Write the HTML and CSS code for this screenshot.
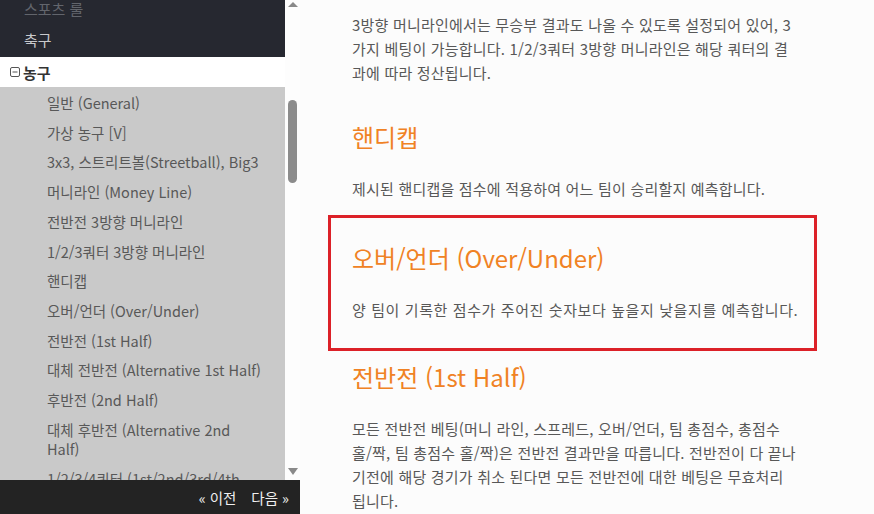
FILE: index.html
```html
<!DOCTYPE html>
<html lang="ko">
<head>
<meta charset="utf-8">
<title>농구 규칙</title>
<link rel="stylesheet" href="styles.css">
</head>
<body>
<div class="app">
  <aside class="sidebar">
    <div class="sidebar-body">
      <nav class="nav">
        <div class="nav-inner">
          <div class="nav-item dark faded">스포츠 룰</div>
          <div class="nav-item dark">축구</div>
          <div class="nav-item open">
            <svg class="toggle" width="10" height="10" viewBox="0 0 10 10"><rect x="0.5" y="0.5" width="9" height="9" rx="1.5" fill="none" stroke="#555" stroke-width="1"/><line x1="2.5" y1="5" x2="7.5" y2="5" stroke="#555" stroke-width="1"/></svg>
            <span>농구</span>
          </div>
          <ul class="sub">
            <li>일반 (General)</li>
            <li>가상 농구 [V]</li>
            <li>3x3, 스트리트볼(Streetball), Big3</li>
            <li>머니라인 (Money Line)</li>
            <li>전반전 3방향 머니라인</li>
            <li>1/2/3쿼터 3방향 머니라인</li>
            <li>핸디캡</li>
            <li>오버/언더 (Over/Under)</li>
            <li>전반전 (1st Half)</li>
            <li>대체 전반전 (Alternative 1st Half)</li>
            <li>후반전 (2nd Half)</li>
            <li>대체 후반전 (Alternative 2nd<br>Half)</li>
            <li>1/2/3/4쿼터 (1st/2nd/3rd/4th Quarter)</li>
          </ul>
        </div>
      </nav>
      <div class="scrollbar">
        <span class="arrow up"></span>
        <div class="track"><span class="thumb"></span></div>
        <span class="arrow down"></span>
      </div>
    </div>
    <div class="pager">
      <a class="pager-link">« 이전</a>
      <a class="pager-link">다음 »</a>
    </div>
  </aside>
  <main class="content">
    <p>3방향 머니라인에서는 무승부 결과도 나올 수 있도록 설정되어 있어, 3<br>가지 베팅이 가능합니다. 1/2/3쿼터 3방향 머니라인은 해당 쿼터의 결<br>과에 따라 정산됩니다.</p>
    <h2>핸디캡</h2>
    <p>제시된 핸디캡을 점수에 적용하여 어느 팀이 승리할지 예측합니다.</p>
    <section class="highlight">
      <h2>오버/언더 (Over/Under)</h2>
      <p class="wide">양 팀이 기록한 점수가 주어진 숫자보다 높을지 낮을지를 예측합니다.</p>
    </section>
    <h2>전반전 (1st Half)</h2>
    <p>모든 전반전 베팅(머니 라인, 스프레드, 오버/언더, 팀 총점수, 총점수<br>홀/짝, 팀 총점수 홀/짝)은 전반전 결과만을 따릅니다. 전반전이 다 끝나<br>기전에 해당 경기가 취소 된다면 모든 전반전에 대한 베팅은 무효처리<br>됩니다.</p>
  </main>
</div>
</body>
</html>
```
FILE: styles.css
```css
* { box-sizing: border-box; }
html, body { margin: 0; padding: 0; }
body {
  font-family: "Noto Sans CJK KR", "Noto Sans", sans-serif;
  background: #fcfcfc;
  color: #555;
}
.app {
  display: flex;
  width: 874px;
  height: 514px;
  overflow: hidden;
}
.sidebar {
  width: 300px;
  flex: none;
  display: flex;
  flex-direction: column;
}
.sidebar-body {
  flex: 1;
  min-height: 0;
  display: flex;
}
.nav {
  width: 285px;
  overflow: hidden;
  background: #c9c9c9;
}
.nav-inner {
  margin-top: -5px;
}
.nav-item {
  height: 31px;
  font-size: 15px;
  padding-left: 24px;
}
.nav-item.dark {
  background: #262830;
  color: #c8c9cc;
  line-height: 28px;
}
.nav-item.faded {
  color: #62656c;
}
.nav-item.open {
  height: 30px;
  background: #ffffff;
  color: #333;
  font-weight: 700;
  padding-left: 10px;
  display: flex;
  align-items: center;
  gap: 3px;
}
.toggle { display: block; }
.sub {
  list-style: none;
  margin: 0;
  padding: 1px 8px 0 47px;
}
.sub li {
  font-size: 14.5px;
  line-height: 19.7px;
  padding: 5px 0;
  color: #585858;
}
.scrollbar {
  width: 15px;
  background: #fdfdfd;
  display: flex;
  flex-direction: column;
  align-items: center;
  padding: 2px 0 5px;
}
.arrow {
  width: 0;
  height: 0;
  border-left: 5px solid transparent;
  border-right: 5px solid transparent;
}
.arrow.up { border-bottom: 5px solid #8a8a8a; }
.arrow.down { border-top: 7px solid #8a8a8a; }
.track {
  flex: 1;
  width: 100%;
  display: flex;
  justify-content: center;
}
.thumb {
  width: 9px;
  height: 83px;
  margin-top: 93px;
  border-radius: 5px;
  background: #8c8c8c;
}
.pager {
  height: 34px;
  flex: none;
  background: #232323;
  display: flex;
  justify-content: flex-end;
  align-items: center;
  gap: 15px;
  padding-right: 11px;
}
.pager-link {
  color: #f0f0f0;
  font-size: 14.5px;
}
.content {
  flex: 1;
  padding: 13px 30px 0 52px;
}
.content p {
  margin: 0;
  font-size: 15px;
  line-height: 24px;
  letter-spacing: 0.2px;
  color: #585858;
}
.content p.wide {
  letter-spacing: 0.6px;
}
.content h2 {
  margin: 36px 0 24px;
  font-size: 24px;
  line-height: 32px;
  font-weight: 400;
  color: #f08224;
}
.highlight {
  position: relative;
  margin: 41px 0 39px;
}
.highlight::before {
  content: "";
  box-sizing: border-box;
  position: absolute;
  top: -27px;
  bottom: -29px;
  left: -24px;
  width: 489px;
  border: 3px solid #dc2128;
  pointer-events: none;
}
```
